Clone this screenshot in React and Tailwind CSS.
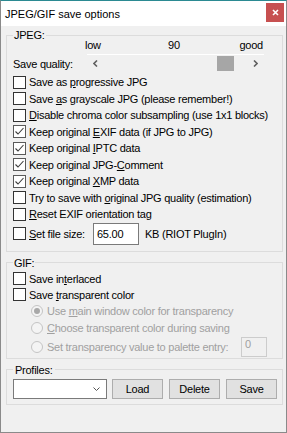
import React from "react";

/* CHECKBOX ROW */
const Check = ({ checked, children }) => (
  <div className="flex items-center h-[16.5px] gap-[3px]">
    <span
      className={`w-[13px] h-[13px] border bg-white flex items-center justify-center shrink-0 ${
        checked ? "border-[#5a5a5a]" : "border-[#333333]"
      }`}
    >
      {checked && (
        <svg width="11" height="11" viewBox="0 0 11 11">
          <path d="M1.5 5.5 L4 8 L9.5 2" fill="none" stroke="#3c3c3c" strokeWidth="1.1" />
        </svg>
      )}
    </span>
    <span className="whitespace-nowrap">{children}</span>
  </div>
);

/* DISABLED RADIO */
const Radio = ({ checked, children, h }) => (
  <div className={`flex items-center ml-[18px] gap-[4px] text-[#a0a0a0] ${h}`}>
    <span className="w-[12px] h-[12px] rounded-full border border-[#c4c4c4] bg-[#f4f4f4] flex items-center justify-center shrink-0">
      {checked && <span className="w-[6px] h-[6px] rounded-full bg-[#a8a8a8]" />}
    </span>
    {children}
  </div>
);

const Btn = ({ children }) => (
  <button className="w-[51px] h-[20px] border border-[#adadad] bg-[#e1e1e1] flex items-center justify-center">
    {children}
  </button>
);

export default function App() {
  return (
    <div className="w-[287px] h-[433px] border border-[#8a8a8a] border-t-[#2b8a92] bg-[#f0f0f0] flex flex-col text-[11px] leading-[14px] tracking-[-0.25px] text-black [font-family:'Liberation_Sans',Arial,sans-serif]">
      {/* TITLE BAR */}
      <div className="h-[25px] bg-white flex justify-between shrink-0">
        <span className="pl-[4px] pt-[6px] text-[11px] tracking-normal">JPEG/GIF save options</span>
        <div className="mt-[2px] mr-[2px] w-[18px] h-[19px] bg-[#c75050] flex items-center justify-center">
          <svg width="7" height="7" viewBox="0 0 7 7">
            <path d="M1 1 L6 6 M6 1 L1 6" stroke="#fff" strokeWidth="1.6" />
          </svg>
        </div>
      </div>

      {/* JPEG */}
      <fieldset className="mt-[4px] ml-[5px] mr-[3px] border border-[#dcdcdc] pl-[6px] pb-[6px]">
        <legend className="px-[1px] leading-[10px]">JPEG:</legend>

        <div className="ml-[72px] w-[178px] grid grid-cols-3 h-[12px] leading-[12px] -mt-[1px]">
          <span>low</span>
          <span className="text-center">90</span>
          <span className="text-right">good</span>
        </div>
        <div className="ml-[74px] w-[177px] h-px bg-white mt-[3px]" />

        <div className="flex items-center h-[15px] mt-[1px]">
          <span className="w-[74px] whitespace-nowrap">Save quality:</span>
          <div className="w-[177px] flex items-center">
            <svg className="ml-[6px]" width="5" height="7" viewBox="0 0 5 7">
              <path d="M4 0.5 L1 3.5 L4 6.5" fill="none" stroke="#606060" strokeWidth="1.6" />
            </svg>
            <div className="flex-1" />
            <div className="w-[17px] h-[15px] bg-[#a6a6a6]" />
            <svg className="ml-[19px] mr-[6px]" width="5" height="7" viewBox="0 0 5 7">
              <path d="M1 0.5 L4 3.5 L1 6.5" fill="none" stroke="#606060" strokeWidth="1.6" />
            </svg>
          </div>
        </div>

        <div className="flex flex-col mt-[3px]">
          <Check>Save as <u>p</u>rogressive JPG</Check>
          <Check>Save <u>a</u>s grayscale JPG (please remember!)</Check>
          <Check><u>D</u>isable chroma color subsampling (use 1x1 blocks)</Check>
          <Check checked>Keep original <u>E</u>XIF data (if JPG to JPG)</Check>
          <Check checked>Keep original <u>I</u>PTC data</Check>
          <Check checked>Keep original JPG-<u>C</u>omment</Check>
          <Check checked>Keep original <u>X</u>MP data</Check>
          <Check>Try to save with <u>o</u>riginal JPG quality (estimation)</Check>
          <Check><u>R</u>eset EXIF orientation tag</Check>

          <div className="flex items-center h-[22px]">
            <span className="w-[13px] h-[13px] border border-[#333333] bg-white shrink-0" />
            <span className="ml-[3px] w-[64px] shrink-0 whitespace-nowrap"><u>S</u>et file size:</span>
            <div className="w-[46px] h-[22px] shrink-0 border border-[#7a7a7a] bg-white flex items-center pl-[3px]">65.00</div>
            <span className="ml-[6px] whitespace-nowrap">KB (RIOT PlugIn)</span>
          </div>
        </div>
      </fieldset>

      {/* GIF */}
      <fieldset className="mt-[6px] ml-[5px] mr-[3px] border border-[#dcdcdc] pl-[6px] pb-[1px]">
        <legend className="px-[1px] leading-[10px]">GIF:</legend>
        <div className="flex flex-col mt-[3px]">
          <div className="flex items-center h-[16px] gap-[3px]">
            <span className="w-[13px] h-[13px] border border-[#333333] bg-white shrink-0" />
            <span>Save in<u>t</u>erlaced</span>
          </div>
          <div className="flex items-center h-[16px] gap-[3px]">
            <span className="w-[13px] h-[13px] border border-[#333333] bg-white shrink-0" />
            <span>Save <u>t</u>ransparent color</span>
          </div>
          <Radio checked h="h-[16px]">
            <span>Use <u>m</u>ain window color for transparency</span>
          </Radio>
          <Radio h="h-[18px]">
            <span><u>C</u>hoose transparent color during saving</span>
          </Radio>
          <Radio h="h-[20px]">
            <span className="w-[190px] whitespace-nowrap">Set transparency value to palette entry:</span>
            <div className="w-[26px] h-[20px] border border-[#cccccc] bg-[#f0f0f0] pl-[3px] leading-[12px]">0</div>
          </Radio>
        </div>
      </fieldset>

      {/* PROFILES */}
      <fieldset className="mt-[6px] ml-[5px] mr-[3px] border border-[#dcdcdc] pl-[6px] pb-[5px]">
        <legend className="px-[2px] leading-[10px]">Profiles:</legend>
        <div className="flex items-center mt-[4px] h-[20px]">
          <div className="w-[94px] h-[20px] border border-[#7a7a7a] bg-white flex items-center justify-end pr-[6px]">
            <svg width="7" height="4" viewBox="0 0 7 4">
              <path d="M0.5 0.5 L3.5 3.5 L6.5 0.5" fill="none" stroke="#555" strokeWidth="1" />
            </svg>
          </div>
          <div className="ml-[5px] flex gap-[6px]">
            <Btn>Load</Btn>
            <Btn>Delete</Btn>
            <Btn>Save</Btn>
          </div>
        </div>
      </fieldset>
    </div>
  );
}
